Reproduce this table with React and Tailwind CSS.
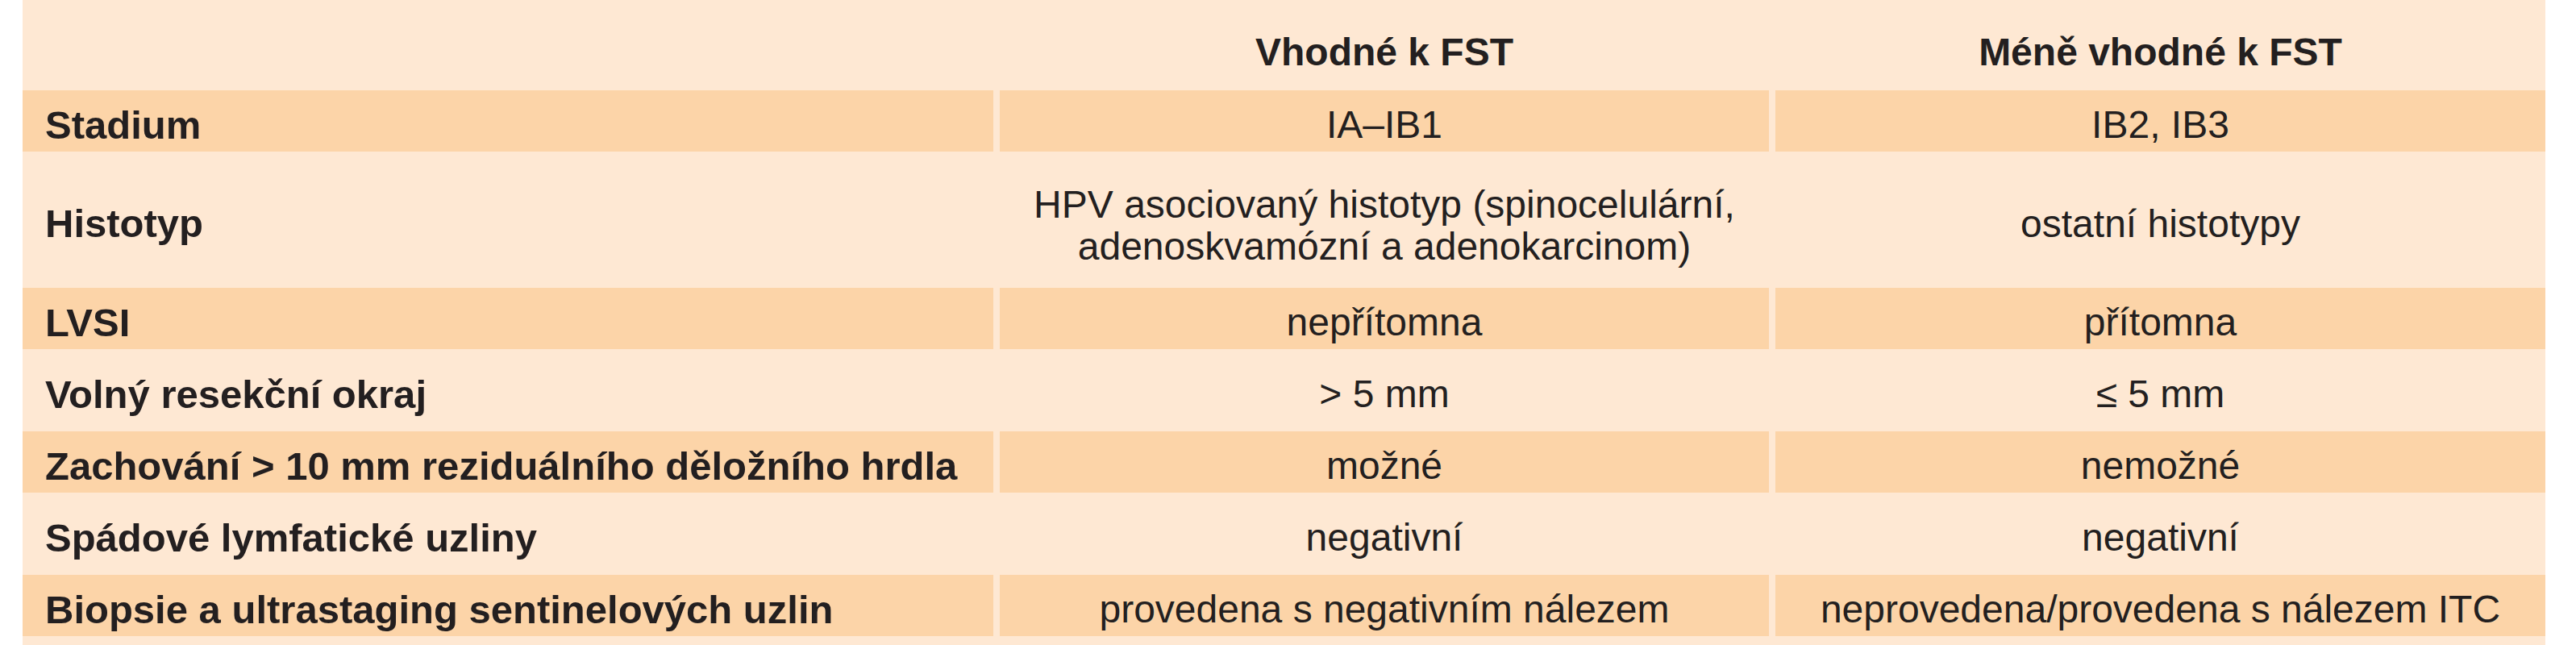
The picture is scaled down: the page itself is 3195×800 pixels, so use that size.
import React from 'react';

const rows = [
  { label: 'Stadium', a: 'IA–IB1', b: 'IB2, IB3', dark: true },
  {
    label: 'Histotyp',
    a: ['HPV asociovaný histotyp (spinocelulární,', 'adenoskvamózní a adenokarcinom)'],
    b: 'ostatní histotypy',
    tall: true,
  },
  { label: 'LVSI', a: 'nepřítomna', b: 'přítomna', dark: true },
  { label: 'Volný resekční okraj', a: '> 5 mm', b: '≤ 5 mm' },
  { label: 'Zachování > 10 mm reziduálního děložního hrdla', a: 'možné', b: 'nemožné', dark: true },
  { label: 'Spádové lymfatické uzliny', a: 'negativní', b: 'negativní' },
  { label: 'Biopsie a ultrastaging sentinelových uzlin', a: 'provedena s negativním nálezem', b: 'neprovedena/provedena s nálezem ITC', dark: true },
];

const Value = ({ text }) => (
  <div className="flex items-center justify-center pt-[10px] text-center whitespace-nowrap">
    {Array.isArray(text) ? (
      <div className="leading-[52px] pt-[4px]">
        {text.map((t) => (
          <div key={t}>{t}</div>
        ))}
      </div>
    ) : (
      <span className="leading-none">{text}</span>
    )}
  </div>
);

const App = () => {
  return (
    <div className="w-[3195px] h-[800px] bg-white overflow-hidden font-['Liberation_Sans',Arial,sans-serif] text-[#231f20]">
      <div className="ml-[28px] w-[3129px] h-[800px] bg-[#fee8d3] flex flex-col gap-[13px]">
        {/* header */}
        <div className="grid grid-cols-[1204px_954px_955px] gap-x-[8px] h-[99px] shrink-0">
          <div />
          <div className="flex items-end justify-center pb-[10px] text-[48px] font-bold leading-none">
            Vhodné k FST
          </div>
          <div className="flex items-end justify-center pb-[10px] text-[48px] font-bold leading-none">
            Méně vhodné k FST
          </div>
        </div>

        {rows.map((row) => (
          <div
            key={row.label}
            className={
              'grid grid-cols-[1204px_954px_955px] gap-x-[8px] shrink-0 ' +
              (row.tall ? 'h-[143px]' : 'h-[76px]')
            }
          >
            <div
              className={
                'flex items-center pt-[10px] pl-[28px] text-[49px] font-bold leading-none whitespace-nowrap ' +
                (row.dark ? 'bg-[#fcd4a8]' : '')
              }
            >
              {row.label}
            </div>
            <div className={'flex justify-center text-[48px] ' + (row.dark ? 'bg-[#fcd4a8]' : '')}>
              <Value text={row.a} />
            </div>
            <div className={'flex justify-center text-[48px] ' + (row.dark ? 'bg-[#fcd4a8]' : '')}>
              <Value text={row.b} />
            </div>
          </div>
        ))}
      </div>
    </div>
  );
};

export default App;
